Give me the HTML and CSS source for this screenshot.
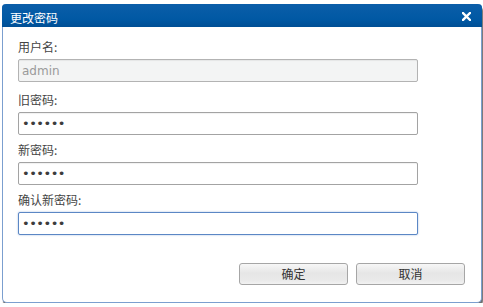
FILE: index.html
```html
<!DOCTYPE html>
<html lang="zh-CN">
<head>
    <meta charset="utf-8"/>
    <title>更改密码</title>
    <link rel="stylesheet" href="styles.css">
</head>
<body>
<div class="dialog">
    <div class="titleBar">
        <span class="title">更改密码</span>
        <span class="close">
            <svg width="9" height="9" viewBox="0 0 9 9">
                <path d="M1 1 L8 8 M8 1 L1 8" stroke="#fff" stroke-width="2.4" stroke-linecap="square"/>
            </svg>
        </span>
    </div>
    <div class="content">
        <div class="field first">
            <label>用户名:</label>
            <input type="text" class="txt disabled" value="admin" disabled="disabled"/>
        </div>
        <div class="field">
            <label>旧密码:</label>
            <input type="password" class="txt pwd" value="123456"/>
        </div>
        <div class="field">
            <label>新密码:</label>
            <input type="password" class="txt pwd" value="123456"/>
        </div>
        <div class="field">
            <label>确认新密码:</label>
            <input type="password" class="txt pwd focus" value="123456"/>
        </div>
    </div>
    <div class="buttons">
        <div class="btn">确定</div>
        <div class="btn">取消</div>
    </div>
</div>
</body>
</html>
```

FILE: styles.css
```css
* {
    padding: 0;
    margin: 0;
    box-sizing: border-box;
}

body {
    background: #fff;
    font-family: "DejaVu Sans", "Noto Sans CJK SC", sans-serif;
    font-size: 12px;
}

.dialog {
    width: 480px;
    height: 299px;
    margin: 4px 0 0 2px;
    border: 1px solid #7b9fcf;
    border-top: none;
    border-radius: 4px 4px 5px 5px;
    background: #fff;
    box-shadow: 1px 3px 1px rgba(60, 60, 60, 0.75);
    display: flex;
    flex-direction: column;
}

.titleBar {
    height: 23px;
    background: linear-gradient(#0b5ea9, #0058a3 70%, #004f95);
    border-radius: 4px 4px 0 0;
    margin: 0 -1px;
    display: flex;
    align-items: center;
    justify-content: space-between;
    padding: 3px 11px 0 8px;
}

.title {
    color: #fff;
    font-family: "Noto Sans CJK SC", sans-serif;
    font-size: 12px;
}

.close {
    display: flex;
    margin-top: -2px;
}

.content {
    padding: 12px 0 0 15px;
    flex: 1;
}

.field {
    margin-bottom: 7px;
}

.field.first {
    margin-bottom: 10px;
}

.field label {
    display: block;
    height: 16px;
    line-height: 16px;
    margin-bottom: 4px;
    color: #444;
    font-family: "Noto Sans CJK SC", sans-serif;
    font-size: 12px;
}

.txt {
    display: block;
    width: 400px;
    height: 23px;
    padding: 0 3px;
    border: 1px solid #a3a3a3;
    border-radius: 2px;
    background: #fff;
    color: #555;
    font-family: "DejaVu Sans", sans-serif;
    font-size: 12px;
    outline: none;
    box-shadow: inset 0 1px 1px rgba(0, 0, 0, 0.06);
}

.txt.pwd {
    color: #3c3c3c;
    font-size: 13px;
    letter-spacing: -0.5px;
}

.txt.disabled {
    background: #f3f4f4;
    color: #9a9a9a;
    border-color: #b3b3b3;
}

.txt.focus {
    border-color: #5b87c5;
    box-shadow: 0 0 2px rgba(91, 135, 197, 0.6);
}

.buttons {
    display: flex;
    justify-content: flex-end;
    gap: 8px;
    padding: 0 16px 17px 0;
}

.btn {
    width: 109px;
    height: 22px;
    line-height: 20px;
    text-align: center;
    border: 1px solid #a6a6a6;
    border-radius: 3px;
    background: linear-gradient(#f7f7f7, #e6e6e6 45%, #e9e9e9 80%, #f2f2f2);
    color: #333;
    font-family: "Noto Sans CJK SC", sans-serif;
    font-size: 12px;
    cursor: pointer;
}
```
